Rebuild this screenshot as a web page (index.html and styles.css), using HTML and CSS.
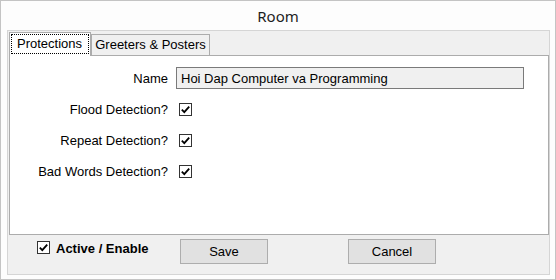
FILE: index.html
```html
<!DOCTYPE html>
<html lang="en">
<head>
    <meta charset="UTF-8">
    <meta name="viewport" content="width=device-width, initial-scale=1.0">
    <title>Room</title>
    <link rel="stylesheet" href="styles.css">
</head>
<body>
    <div class="window">
        <div class="titlebar">Room</div>

        <div class="panel">
            <div class="tabs">
                <div class="tab tab-active"><span class="focus">Protections</span></div>
                <div class="tab tab-inactive">Greeters &amp; Posters</div>
            </div>

            <div class="page">
                <label class="label">Name</label>
                <input class="textbox" type="text" value="Hoi Dap Computer va Programming" readonly>

                <label class="label">Flood Detection?</label>
                <span class="check"><svg width="11" height="11" viewBox="0 0 11 11"><path d="M1.8 5.6 L4.3 8.1 L9.2 2.6" fill="none" stroke="#000" stroke-width="1.8"/></svg></span>

                <label class="label">Repeat Detection?</label>
                <span class="check"><svg width="11" height="11" viewBox="0 0 11 11"><path d="M1.8 5.6 L4.3 8.1 L9.2 2.6" fill="none" stroke="#000" stroke-width="1.8"/></svg></span>

                <label class="label">Bad Words Detection?</label>
                <span class="check"><svg width="11" height="11" viewBox="0 0 11 11"><path d="M1.8 5.6 L4.3 8.1 L9.2 2.6" fill="none" stroke="#000" stroke-width="1.8"/></svg></span>
            </div>

            <div class="footer">
                <div class="enable">
                    <span class="check"><svg width="11" height="11" viewBox="0 0 11 11"><path d="M1.8 5.6 L4.3 8.1 L9.2 2.6" fill="none" stroke="#000" stroke-width="1.8"/></svg></span>
                    <span>Active / Enable</span>
                </div>
                <button class="btn">Save</button>
                <button class="btn">Cancel</button>
            </div>
        </div>
    </div>
</body>
</html>
```

FILE: styles.css
```css
body {
    margin: 0;
    font-family: "Liberation Sans", Arial, sans-serif;
    font-size: 13px;
    color: #000;
    background: #fff;
}
.window {
    width: 556px;
    height: 280px;
    box-sizing: border-box;
    border: 1px solid #c4c4c4;
    background: #fdfdfd;
    display: flex;
    flex-direction: column;
}
.titlebar {
    height: 29px;
    line-height: 30px;
    text-align: center;
    font-family: "Noto Sans", "Open Sans", sans-serif;
    font-size: 15px;
    color: #1e1e1e;
}
.panel {
    flex: 1;
    margin: 0 5px 4px 6px;
    border: 1px solid #d5d5d5;
    background: #f0f0f0;
    display: flex;
    flex-direction: column;
}
.tabs {
    display: flex;
    align-items: flex-end;
    height: 24px;
    margin-left: 1px;
}
.tab {
    box-sizing: border-box;
    border: 1px solid #acacac;
    border-bottom: none;
}
.tab-active {
    position: relative;
    z-index: 1;
    width: 82px;
    height: 24px;
    margin-bottom: -1px;
    padding: 1px 1px 2px;
    background: #fff;
}
.focus {
    display: block;
    height: 20px;
    box-sizing: border-box;
    border: 1px dotted #000;
    line-height: 18px;
    padding-left: 5px;
}
.tab-inactive {
    width: 119px;
    height: 21px;
    line-height: 20px;
    text-align: center;
    background: #f0f0f0;
}
.page {
    height: 180px;
    box-sizing: border-box;
    margin-left: 1px;
    border: 1px solid #acacac;
    background: #fff;
    padding-top: 11px;
    display: grid;
    grid-template-columns: 158px 1fr;
    grid-auto-rows: 22px;
    row-gap: 9px;
    column-gap: 8px;
    align-content: start;
    align-items: center;
}
.label {
    text-align: right;
}
.textbox {
    width: 348px;
    height: 22px;
    box-sizing: border-box;
    margin: 0;
    border: 1px solid #7a7a7a;
    background: #f0f0f0;
    padding: 0 0 0 4px;
    font: inherit;
    color: #000;
    outline: none;
}
.check {
    width: 13px;
    height: 13px;
    box-sizing: border-box;
    border: 1px solid #333;
    background: #fff;
    margin-left: 3px;
    display: flex;
    align-items: center;
    justify-content: center;
}
.footer {
    flex: 1;
    display: flex;
    align-items: flex-start;
    padding: 4px 0 0 29px;
}
.enable {
    width: 143px;
    display: flex;
    gap: 6px;
    margin-top: 2px;
    font-weight: bold;
    line-height: 16px;
}
.enable .check {
    margin-left: 0;
}
.btn {
    width: 88px;
    height: 25px;
    box-sizing: border-box;
    border: 1px solid #adadad;
    background: #e1e1e1;
    padding: 0;
    font: inherit;
    color: #000;
}
.btn + .btn {
    margin-left: 80px;
}
```
